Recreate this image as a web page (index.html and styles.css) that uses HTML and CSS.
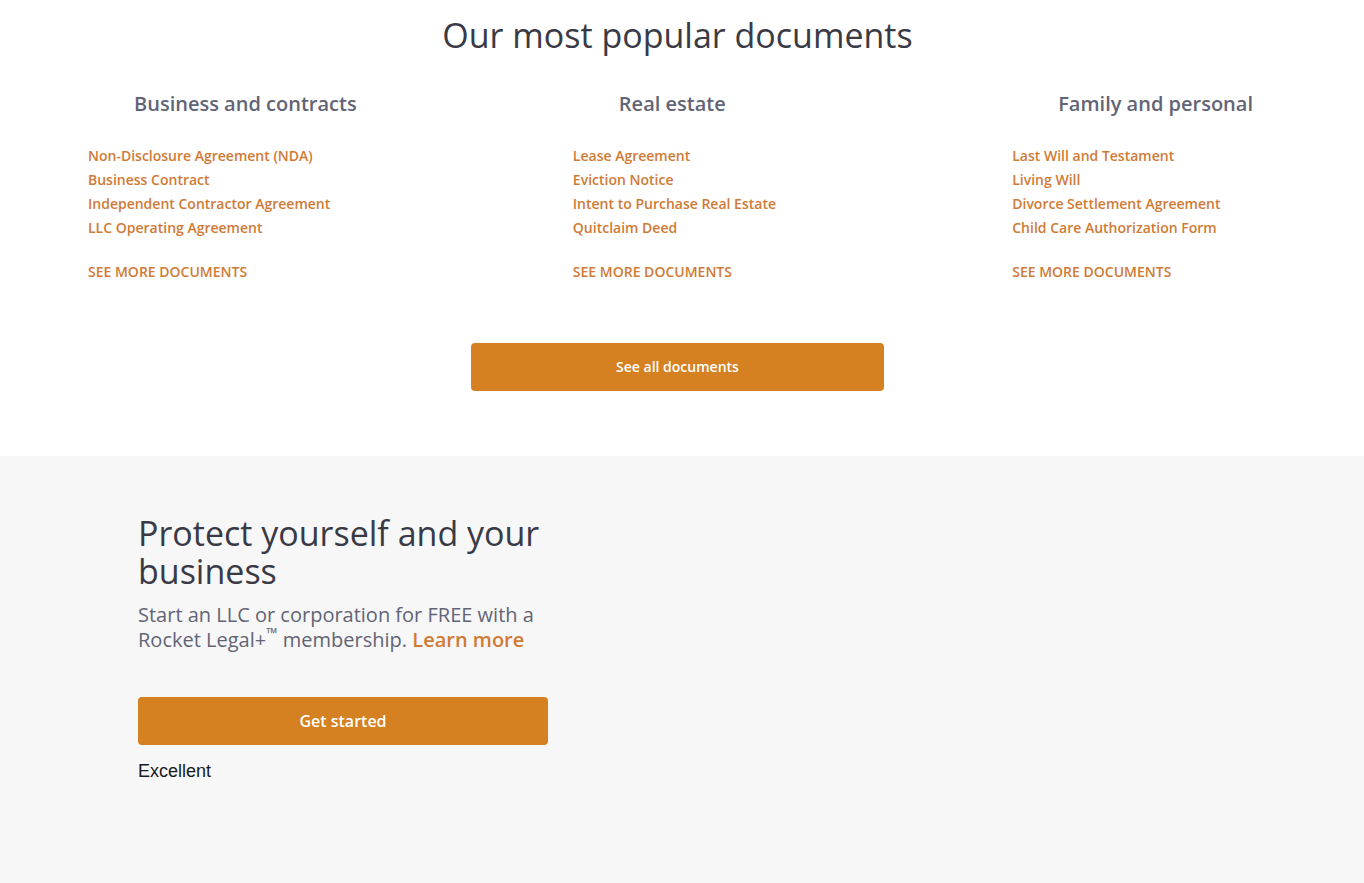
FILE: index.html
```html
<!DOCTYPE html>
<html lang="en">
<head>
<meta charset="utf-8">
<meta name="viewport" content="width=device-width, initial-scale=1">
<title>Popular documents</title>
<link rel="stylesheet" href="styles.css">
</head>
<body>
<main>
  <section class="documents">
    <h2 class="title">Our most popular documents</h2>
    <div class="columns">
      <div class="column">
        <h3 class="column-title">Business and contracts</h3>
        <ul class="links">
          <li><a href="#">Non-Disclosure Agreement (NDA)</a></li>
          <li><a href="#">Business Contract</a></li>
          <li><a href="#">Independent Contractor Agreement</a></li>
          <li><a href="#">LLC Operating Agreement</a></li>
        </ul>
        <a class="more" href="#">SEE MORE DOCUMENTS</a>
      </div>
      <div class="column">
        <h3 class="column-title">Real estate</h3>
        <ul class="links">
          <li><a href="#">Lease Agreement</a></li>
          <li><a href="#">Eviction Notice</a></li>
          <li><a href="#">Intent to Purchase Real Estate</a></li>
          <li><a href="#">Quitclaim Deed</a></li>
        </ul>
        <a class="more" href="#">SEE MORE DOCUMENTS</a>
      </div>
      <div class="column">
        <h3 class="column-title">Family and personal</h3>
        <ul class="links">
          <li><a href="#">Last Will and Testament</a></li>
          <li><a href="#">Living Will</a></li>
          <li><a href="#">Divorce Settlement Agreement</a></li>
          <li><a href="#">Child Care Authorization Form</a></li>
        </ul>
        <a class="more" href="#">SEE MORE DOCUMENTS</a>
      </div>
    </div>
    <a class="button button-all" href="#">See all documents</a>
  </section>
  <section class="protect">
    <div class="protect-content">
      <h2 class="title">Protect yourself and your business</h2>
      <p class="lead">Start an LLC or corporation for FREE with a Rocket Legal+<sup>™</sup> membership. <a href="#">Learn more</a></p>
      <a class="button button-start" href="#">Get started</a>
      <p class="rating">Excellent</p>
    </div>
  </section>
</main>
</body>
</html>
```
FILE: styles.css
```css
* {
  box-sizing: border-box;
}

body {
  margin: 0;
  min-height: 100vh;
  display: flex;
  flex-direction: column;
  background: #fff;
  color: #393a46;
  font-family: "Open Sans", sans-serif;
}

main {
  flex: 1;
  display: flex;
  flex-direction: column;
}

h2, h3, p, ul {
  margin: 0;
  padding: 0;
}

a {
  color: #d07a35;
  font-weight: 600;
  text-decoration: none;
}

.title {
  font-size: 34px;
  line-height: 38px;
  font-weight: 400;
}

.documents {
  display: flex;
  flex-direction: column;
  align-items: center;
  padding: 16px 97px 65px 88px;
}

.columns {
  align-self: stretch;
  display: flex;
  justify-content: space-between;
  padding: 34px 14px 0 0;
}

.column-title {
  padding-left: 46px;
  color: #626475;
  font-size: 20px;
  line-height: 32px;
  font-weight: 600;
}

.links {
  padding: 24px 20px 20px 0;
  list-style: none;
}

.links li,
.more {
  display: block;
  font-size: 14px;
  line-height: 24px;
}

.button {
  display: block;
  border-radius: 4px;
  background: #d58021;
  color: #fff;
  line-height: 48px;
  text-align: center;
}

.button-all {
  width: 35%;
  margin-top: 59px;
  font-size: 14px;
}

.protect {
  flex: 1;
  padding: 58px 138px 96px;
  background: #f7f7f7;
}

.protect-content {
  max-width: 410px;
}

.lead {
  padding: 12px 0 45px;
  color: #626475;
  font-size: 20px;
  line-height: 25px;
}

.lead sup {
  font-size: 15px;
  line-height: 0;
}

.button-start {
  font-size: 16px;
}

.rating {
  padding-top: 14px;
  color: #191919;
  font-family: "Liberation Sans", Arial, sans-serif;
  font-size: 18px;
  line-height: 24px;
}
```
